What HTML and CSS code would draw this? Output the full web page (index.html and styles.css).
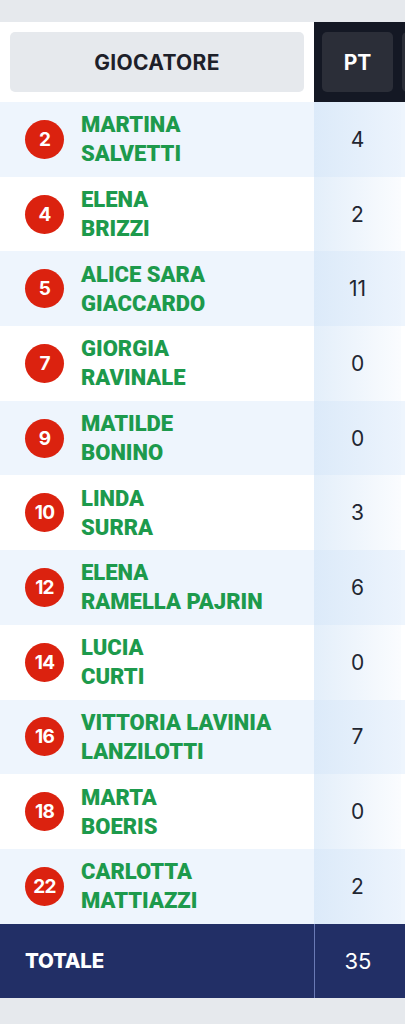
FILE: index.html
```html
<!DOCTYPE html>
<html lang="it">
<head>
<meta charset="utf-8">
<link rel="stylesheet" href="styles.css">
</head>
<body>
<div class="page">
  <div class="table">
    <div class="row head">
      <div class="c-name"><div class="hbox light">GIOCATORE</div></div>
      <div class="c-pt dark"><div class="hbox darkbox">PT</div></div>
      <div class="c-x dark"><div class="hbox darkbox"></div></div>
    </div>
    <div class="row odd"><div class="c-name"><span class="num">2</span><span class="nm">MARTINA<br>SALVETTI</span></div><div class="c-pt">4</div><div class="c-x"></div></div>
    <div class="row"><div class="c-name"><span class="num">4</span><span class="nm">ELENA<br>BRIZZI</span></div><div class="c-pt">2</div><div class="c-x"></div></div>
    <div class="row odd"><div class="c-name"><span class="num">5</span><span class="nm">ALICE SARA<br>GIACCARDO</span></div><div class="c-pt">11</div><div class="c-x"></div></div>
    <div class="row"><div class="c-name"><span class="num">7</span><span class="nm">GIORGIA<br>RAVINALE</span></div><div class="c-pt">0</div><div class="c-x"></div></div>
    <div class="row odd"><div class="c-name"><span class="num">9</span><span class="nm">MATILDE<br>BONINO</span></div><div class="c-pt">0</div><div class="c-x"></div></div>
    <div class="row"><div class="c-name"><span class="num">10</span><span class="nm">LINDA<br>SURRA</span></div><div class="c-pt">3</div><div class="c-x"></div></div>
    <div class="row odd"><div class="c-name"><span class="num">12</span><span class="nm">ELENA<br>RAMELLA PAJRIN</span></div><div class="c-pt">6</div><div class="c-x"></div></div>
    <div class="row"><div class="c-name"><span class="num">14</span><span class="nm">LUCIA<br>CURTI</span></div><div class="c-pt">0</div><div class="c-x"></div></div>
    <div class="row odd"><div class="c-name"><span class="num">16</span><span class="nm">VITTORIA LAVINIA<br>LANZILOTTI</span></div><div class="c-pt">7</div><div class="c-x"></div></div>
    <div class="row"><div class="c-name"><span class="num">18</span><span class="nm">MARTA<br>BOERIS</span></div><div class="c-pt">0</div><div class="c-x"></div></div>
    <div class="row odd"><div class="c-name"><span class="num">22</span><span class="nm">CARLOTTA<br>MATTIAZZI</span></div><div class="c-pt">2</div><div class="c-x"></div></div>
    <div class="row foot"><div class="c-name"><span class="tot">TOTALE</span></div><div class="c-pt">35</div><div class="c-x"></div></div>
  </div>
</div>
</body>
</html>
```
FILE: styles.css
```css
* { box-sizing: border-box; }
html, body { margin: 0; padding: 0; }
body {
  background: #e6e9ed;
  font-family: Inter, "Noto Sans", sans-serif;
  width: 405px;
  height: 1024px;
  overflow: hidden;
}
.page {
  padding-top: 22px;
  overflow: hidden;
}
.table {
  width: 500px;
  display: flex;
  flex-direction: column;
}
.row {
  display: grid;
  grid-template-columns: 314px 87px 99px;
  height: 74.7px;
  background: #fff;
}
.row.odd { background: #eef5fd; }
.row.head { height: 80px; background: #fff; }
.c-name {
  display: flex;
  align-items: center;
  padding-left: 25px;
}
.head .c-name { padding: 10px; }
.c-pt {
  display: flex;
  align-items: center;
  justify-content: center;
  font-size: 21px;
  color: #222631;
  background: linear-gradient(90deg, rgba(205,225,246,0.55), rgba(225,236,250,0.15));
}
.head .c-pt { padding: 10px 8px; }
.head .c-x { padding: 10px 8px 10px 1px; }
.dark { background: #141824 !important; }
.hbox {
  width: 100%;
  height: 100%;
  border-radius: 5px;
  display: flex;
  align-items: center;
  justify-content: center;
  font-weight: 700;
  font-size: 21px;
}
.hbox.light { background: #e6e9ed; color: #1d2029; letter-spacing: 0.3px; }
.hbox.darkbox { background: #2b2e38; color: #fff; }
.num {
  flex: 0 0 39px;
  width: 39px;
  height: 39px;
  border-radius: 50%;
  background: #db220f;
  color: #fff;
  font-weight: 700;
  font-size: 19px;
  display: flex;
  align-items: center;
  justify-content: center;
  letter-spacing: -0.8px;
}
.nm {
  margin-left: 17px;
  color: #1d9a4c;
  font-family: Roboto, Inter, sans-serif;
  font-weight: 900;
  font-size: 22px;
  line-height: 29px;
  letter-spacing: 0px;
}
.row.foot { background: #222f66; height: 74px; }
.foot .c-pt {
  background: transparent;
  color: #fff;
  font-size: 22px;
  border-left: 1px solid #6a7ab5;
}
.tot {
  color: #fff;
  font-weight: 800;
  font-size: 20.5px;
  letter-spacing: -0.2px;
}
```
